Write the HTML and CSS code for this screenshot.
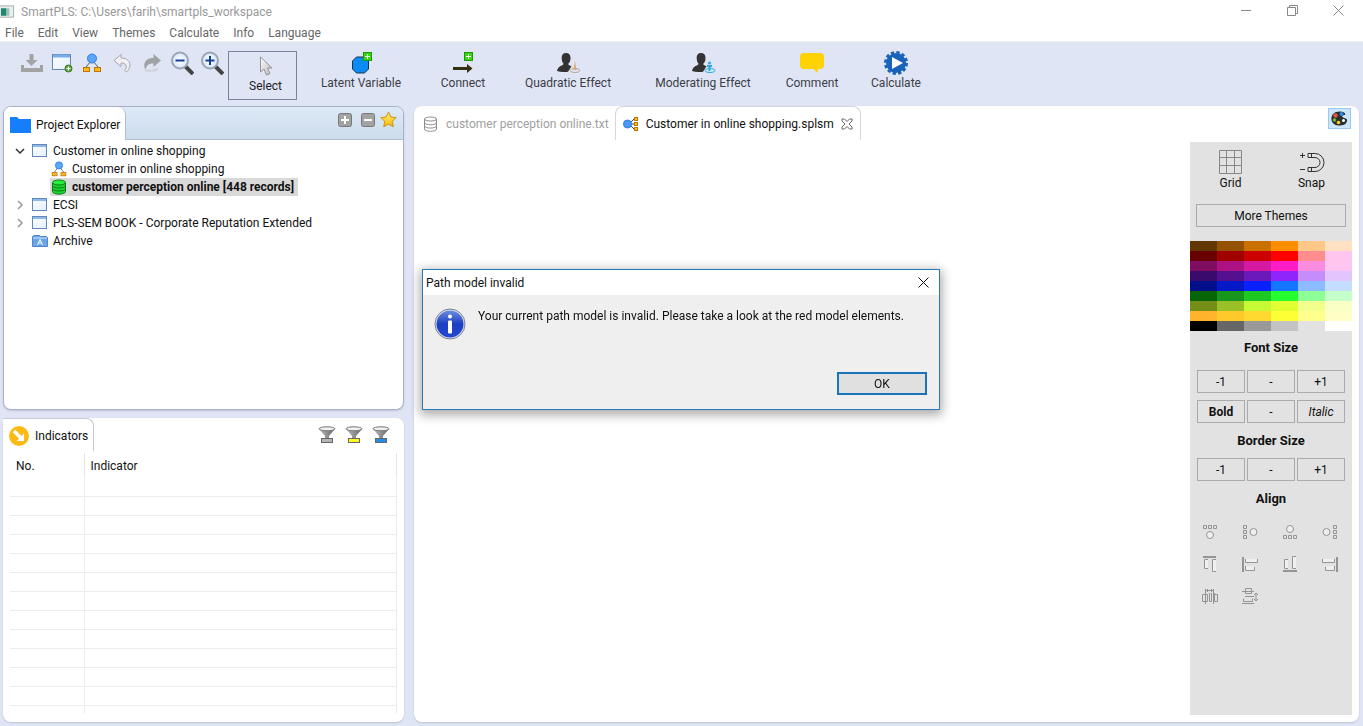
FILE: index.html
```html
<!DOCTYPE html>
<html lang="en">
<head>
<meta charset="utf-8">
<meta name="viewport" content="width=device-width, initial-scale=1">
<title>SmartPLS</title>
<link rel="stylesheet" href="styles.css">
</head>
<body>
<svg class="defs" width="0" height="0" aria-hidden="true">
  <defs>
    <linearGradient id="gArrow" x1="0" y1="0" x2="1" y2="1"><stop offset="0" stop-color="#fff"/><stop offset="1" stop-color="#b9b9bd"/></linearGradient>
    <linearGradient id="gStar" x1="0" y1="0" x2="0" y2="1"><stop offset="0" stop-color="#fff27a"/><stop offset="1" stop-color="#f8b800"/></linearGradient>
    <linearGradient id="gInfo" x1="0" y1="0" x2="0" y2="1"><stop offset="0" stop-color="#6d8ee0"/><stop offset=".5" stop-color="#1d3fc0"/><stop offset="1" stop-color="#2247d2"/></linearGradient>
    <linearGradient id="gFunnel" x1="0" y1="0" x2="1" y2="0"><stop offset="0" stop-color="#bbb"/><stop offset="1" stop-color="#666"/></linearGradient>
    <linearGradient id="gWin" x1="0" y1="0" x2="1" y2="1"><stop offset="0" stop-color="#fff"/><stop offset="1" stop-color="#e3eefb"/></linearGradient>
    <radialGradient id="gLens"><stop offset="0" stop-color="#fff"/><stop offset="1" stop-color="#d4e6f8"/></radialGradient>
  </defs>
  <symbol id="window" viewBox="0 0 16 14"><rect x=".5" y=".5" width="14" height="12" fill="url(#gWin)" stroke="#6187b8"/><path d="M1 2h13" stroke="#8db8ea" stroke-width="2"/></symbol>
  <symbol id="model" viewBox="0 0 20 20"><path d="M9 8L4 14M11 8l5 6" stroke="#555" stroke-width="1"/><circle cx="10" cy="5.500" r="4.500" fill="#5ba5fa" stroke="#2f7de0"/><rect x="1.500" y="14.500" width="6" height="4" fill="#ffb91f" stroke="#bb7408"/><rect x="12.500" y="14.500" width="6" height="4" fill="#ffb91f" stroke="#bb7408"/></symbol>
  <symbol id="funnel" viewBox="0 0 18 18"><path d="M1 3l6 7v4h4v-4l6-7z" fill="url(#gFunnel)"/><ellipse cx="9" cy="2.800" rx="8" ry="2" fill="#f0f0f0" stroke="#777"/><rect x="3.500" y="12.500" width="11" height="4" fill="currentColor" stroke="#666"/></symbol>
  <symbol id="person" viewBox="0 0 15 19"><path d="M9 0c-3 0-4.500 2-4.300 5 0 3 .8 4.500 1.800 5.800 0 2-5.500 1.700-6.500 7.200q5 1.500 11 .8l3.500-5.500c-1.800-1-3.200-1-3.200-2.500C12.700 9.500 13.500 8 13.500 5c.1-3-1.500-5-4.500-5z" fill="#333"/></symbol>
  <symbol id="add" viewBox="0 0 9 9"><rect x=".5" y=".5" width="8" height="8" fill="#37d60d" stroke="#1d9b05"/><path d="M4.500 2v5M2 4.500h5" stroke="#fff"/></symbol>
</svg>

<header>
  <div class="titlebar">
    <svg class="app-icon" viewBox="0 0 16 14" aria-hidden="true"><rect x="-1" y=".5" width="15.500" height="12" fill="#e9eeee" stroke="#a8adb0"/><rect x="1" y="3" width="6" height="8" fill="#258571"/><rect x="7" y="3" width="3" height="8" fill="#9cc5bd"/></svg>
    <h1>SmartPLS: C:\Users\farih\smartpls_workspace</h1>
    <div class="window-controls">
      <button type="button" aria-label="Minimize"><svg viewBox="0 0 11 11"><path d="M0 5.500h10" /></svg></button>
      <button type="button" aria-label="Restore"><svg viewBox="0 0 11 11"><path d="M.5 2.500h8v8h-8zM2.500 2.500v-2h8v8h-2"/></svg></button>
      <button type="button" aria-label="Close"><svg viewBox="0 0 11 11"><path d="M.5.5l10 10M10.500.5l-10 10"/></svg></button>
    </div>
  </div>
  <nav class="menubar" aria-label="Main menu">
    <button type="button">File</button><button type="button">Edit</button><button type="button">View</button><button type="button">Themes</button><button type="button">Calculate</button><button type="button">Info</button><button type="button">Language</button>
  </nav>
</header>

<div class="toolbar" role="toolbar" aria-label="Tools">
  <div class="quick-tools">
    <button type="button" aria-label="Save"><svg width="24" height="20" viewBox="0 0 24 20"><path d="M9.500 1h4v6h4L11.500 13 5.500 7h4z" fill="#a3a3a3"/><path d="M1 12h3v3h16v-3h3v7H1z" fill="#a3a3a3"/></svg></button>
    <button type="button" aria-label="New project"><svg width="22" height="20" viewBox="0 0 22 20"><rect x="1.500" y="1.500" width="18" height="15" fill="url(#gWin)" stroke="#6187b8"/><path d="M2 3h17" stroke="#77aeea" stroke-width="3"/><circle cx="17.500" cy="15.500" r="3.500" fill="#65a843" stroke="#397520"/><path d="M17.500 13.500v4M15.500 15.500h4" stroke="#fff"/></svg></button>
    <button type="button" aria-label="New path model"><svg width="20" height="20"><use href="#model"/></svg></button>
    <button type="button" aria-label="Undo"><svg width="18" height="20" viewBox="0 0 18 20"><path d="M1 7.500L8 1.500v3.500c9 0 12 8 5.500 14-1-.5-1.500-1-2-1.500C15 14 13 9.500 8 10v3.500z" fill="#f0f0f2" stroke="#a6a6aa"/></svg></button>
    <button type="button" aria-label="Redo"><svg width="18" height="20" viewBox="0 0 18 20"><path d="M18 7.500L10.500 1v4C3 4.500-1 11 2.500 17c.7-5 4-7 8-6.500v3.500z" fill="#a0a2a6"/><path d="M2 17q6 2 13-1" stroke="#d0d2da" fill="none" stroke-width="2"/></svg></button>
    <button type="button" aria-label="Zoom out"><svg width="24" height="24" viewBox="0 0 24 24"><path d="M15 15l8 8" stroke="#444" stroke-width="4"/><circle cx="10" cy="9.500" r="8" fill="url(#gLens)" stroke="#9aa6b5" stroke-width="2"/><path d="M5.500 9.500h9" stroke="#153d9c" stroke-width="2"/></svg></button>
    <button type="button" aria-label="Zoom in"><svg width="24" height="24" viewBox="0 0 24 24"><path d="M15 15l8 8" stroke="#444" stroke-width="4"/><circle cx="10" cy="9.500" r="8" fill="url(#gLens)" stroke="#9aa6b5" stroke-width="2"/><path d="M5.500 9.500h9M10 5v9" stroke="#153d9c" stroke-width="2"/></svg></button>
  </div>
  <button type="button" class="tool tool-select" aria-pressed="true"><svg width="14" height="20" viewBox="0 0 14 20"><path d="M1.500 1v15l3.500-3 2.500 6 3.500-1.500-2.500-5.500h4.500z" fill="url(#gArrow)" stroke="#929297"/></svg><span>Select</span></button>
  <button type="button" class="tool tool-latent"><svg width="22" height="22" viewBox="0 0 22 22"><path d="M6.500 5h8l4 4v8l-4 4h-8l-4-4V9z" fill="#0d8bf5" stroke="#17354e"/><use href="#add" x="13" y="0" width="9" height="9"/></svg><span>Latent Variable</span></button>
  <button type="button" class="tool tool-connect"><svg width="20" height="22" viewBox="0 0 20 22"><path d="M0 15h14v-3l5.500 4.500L14 21v-3H0z" fill="#352f12"/><use href="#add" x="11" y="0" width="9" height="9"/></svg><span>Connect</span></button>
  <button type="button" class="tool tool-quadratic"><svg width="25" height="22" viewBox="0 0 25 22"><use href="#person" x="1" y="1" width="15" height="19"/><ellipse cx="19" cy="18.500" rx="5" ry="2" fill="none" stroke="#bba795"/><path d="M19 9l-1.500 9h3z" fill="#dba66f"/></svg><span>Quadratic Effect</span></button>
  <button type="button" class="tool tool-moderating"><svg width="25" height="22" viewBox="0 0 25 22"><use href="#person" x="1" y="1" width="15" height="19"/><ellipse cx="19" cy="18.500" rx="5" ry="2" fill="#d5effb" stroke="#2fa5dd"/><circle cx="18.500" cy="11" r="1.500" fill="#2fa5dd"/><path d="M16 13h5v2h-1.500v4h-2v-4H16z" fill="#2fa5dd"/></svg><span>Moderating Effect</span></button>
  <button type="button" class="tool tool-comment"><svg width="24" height="22" viewBox="0 0 24 22"><path d="M4 1h16q4 0 4 4v8q0 4-4 4h-2l-.5 4-4-4H4q-4 0-4-4V5q0-4 4-4z" fill="#ffd203"/></svg><span>Comment</span></button>
  <button type="button" class="tool tool-calculate"><svg width="24" height="24" viewBox="0 0 24 24"><circle cx="12" cy="12" r="10" fill="#1963b9"/><circle cx="12" cy="12" r="10.500" fill="none" stroke="#1963b9" stroke-width="3" stroke-dasharray="3.300 2.200"/><path d="M8 6l11 6-11 6z" fill="#fff"/></svg><span>Calculate</span></button>
</div>

<main class="workspace">
  <div class="sidebar">
    <section class="panel explorer">
      <div class="panel-head">
        <h2 class="panel-tab"><svg width="23" height="18" viewBox="0 0 23 18"><path d="M1 1h7l2 2h12v14H1z" fill="#147efb"/></svg>Project Explorer</h2>
        <div class="panel-actions">
          <button type="button" aria-label="Expand all"><svg width="14" height="14" viewBox="0 0 14 14"><rect x=".5" y=".5" width="13" height="13" rx="2" fill="#a3a3a3" stroke="#777"/><path d="M7 3v8M3 7h8" stroke="#fff" stroke-width="2"/></svg></button>
          <button type="button" aria-label="Collapse all"><svg width="14" height="14" viewBox="0 0 14 14"><rect x=".5" y=".5" width="13" height="13" rx="2" fill="#a3a3a3" stroke="#777"/><path d="M3 7h8" stroke="#fff" stroke-width="2"/></svg></button>
          <button type="button" aria-label="Favorites"><svg width="17" height="17" viewBox="0 0 17 17"><path d="M8.500 1l2.300 5 5.400.6-4 3.700 1.100 5.500-4.800-2.700-4.800 2.700 1.100-5.500-4-3.700L6.200 6z" fill="url(#gStar)" stroke="#cf9110"/></svg></button>
        </div>
      </div>
      <ul class="tree">
        <li><div class="node"><svg class="chevron open" viewBox="0 0 10 10"><path d="M1 3l4 4 4-4"/></svg><svg class="node-icon"><use href="#window"/></svg><span>Customer in online shopping</span></div>
          <ul>
            <li><div class="node"><svg class="node-icon"><use href="#model"/></svg><span>Customer in online shopping</span></div></li>
            <li><div class="node selected"><svg class="node-icon" viewBox="0 0 16 16"><path d="M1.500 3.500v9c0 3.500 13 3.500 13 0v-9z" fill="#18d72c" stroke="#12761c"/><ellipse cx="8" cy="3.500" rx="6.500" ry="2.500" fill="#25ef3c" stroke="#12761c"/><path d="M1.500 6.500c0 3.300 13 3.300 13 0M1.500 9.500c0 3.300 13 3.300 13 0" fill="none" stroke="#12761c"/></svg><span>customer perception online [448 records]</span></div></li>
          </ul>
        </li>
        <li><div class="node"><svg class="chevron" viewBox="0 0 10 10"><path d="M3 1l4 4-4 4"/></svg><svg class="node-icon"><use href="#window"/></svg><span>ECSI</span></div></li>
        <li><div class="node"><svg class="chevron" viewBox="0 0 10 10"><path d="M3 1l4 4-4 4"/></svg><svg class="node-icon"><use href="#window"/></svg><span>PLS-SEM BOOK - Corporate Reputation Extended</span></div></li>
        <li><div class="node"><span class="chevron"></span><svg class="node-icon" viewBox="0 0 16 14"><path d="M.5 2.500h1v-1h6l1 1h6l1 1v9h-15z" fill="#6aa5e5" stroke="#4d86cc"/><path d="M1 4h14" stroke="#c8e0fa"/><path d="M5.500 11L8 5.500l2.500 5.500M6.500 9h3" fill="none" stroke="#fff"/></svg><span>Archive</span></div></li>
      </ul>
    </section>

    <section class="panel indicators">
      <div class="panel-head">
        <h2 class="panel-tab"><svg width="20" height="20" viewBox="0 0 20 20"><circle cx="10" cy="10" r="10" fill="#fcba16"/><path d="M5 5l7 7" stroke="#fff" stroke-width="3.500"/><path d="M15 7.500V15H7.500z" fill="#fff"/></svg>Indicators</h2>
        <div class="panel-actions">
          <button type="button" class="filter-gray" aria-label="Clear filter"><svg width="18" height="18"><use href="#funnel"/></svg></button>
          <button type="button" class="filter-yellow" aria-label="Yellow filter"><svg width="18" height="18"><use href="#funnel"/></svg></button>
          <button type="button" class="filter-blue" aria-label="Blue filter"><svg width="18" height="18"><use href="#funnel"/></svg></button>
        </div>
      </div>
      <table class="indicator-table">
        <thead><tr><th scope="col">No.</th><th scope="col">Indicator</th></tr></thead>
        <tbody>
          <tr><td></td><td></td></tr><tr><td></td><td></td></tr><tr><td></td><td></td></tr><tr><td></td><td></td></tr>
          <tr><td></td><td></td></tr><tr><td></td><td></td></tr><tr><td></td><td></td></tr><tr><td></td><td></td></tr>
          <tr><td></td><td></td></tr><tr><td></td><td></td></tr><tr><td></td><td></td></tr><tr><td></td><td></td></tr>
          <tr class="partial"><td></td><td></td></tr>
        </tbody>
      </table>
    </section>
  </div>

  <section class="panel editor">
    <div class="editor-head">
      <div class="tabs" role="tablist">
        <button type="button" class="tab" role="tab" aria-selected="false"><svg width="16" height="16" viewBox="0 0 16 16" fill="none" stroke="#8d8d8d"><path d="M1.500 3v10c0 3 12 3 12 0V3"/><ellipse cx="7.500" cy="3" rx="6" ry="2"/><path d="M1.500 6.500c0 3 12 3 12 0M1.500 9.800c0 3 12 3 12 0"/></svg><span>customer perception online.txt</span></button>
        <button type="button" class="tab active" role="tab" aria-selected="true"><svg width="16" height="16" viewBox="0 0 16 16"><path d="M7 7l4-4M7 8h4M7 9l4 4" stroke="#444"/><circle cx="4.500" cy="8" r="4" fill="#4a98f8" stroke="#2f7de0"/><rect x="11.500" y="1.500" width="3" height="3" fill="#ffbe30" stroke="#bb7408"/><rect x="11.500" y="6.500" width="3" height="3" fill="#ffbe30" stroke="#bb7408"/><rect x="11.500" y="11.500" width="3" height="3" fill="#ffbe30" stroke="#bb7408"/></svg><span>Customer in online shopping.splsm</span><svg class="tab-close" width="12" height="12" viewBox="0 0 12 12"><path d="M1 1h2.500L6 3.500 8.500 1H11v2L8 6l3 3v2H8.500L6 8.500 3.500 11H1V9l3-3-3-3z" fill="#fff" stroke="#666"/></svg></button>
      </div>
      <button type="button" class="palette-toggle" aria-label="Themes palette"><svg width="17" height="15" viewBox="0 0 17 15"><path d="M9 .5C3 .5 0 4 .5 8.500 1 12.500 4 14.500 9 14.500c5 0 7.500-3 7-6-.5-1.500-3.500-1-4.500-2.500S13 4 14.500 3.500C14 1.500 12 .5 9 .5z" fill="#26302f"/><circle cx="4.500" cy="4.500" r="2.200" fill="#e8543f"/><circle cx="10.500" cy="3" r="2" fill="#2c8af0"/><circle cx="3.500" cy="9" r="1.800" fill="#79b52e"/><circle cx="7.500" cy="11.500" r="1.800" fill="#ffc928"/><circle cx="12.500" cy="9.500" r="1.500" fill="#fff"/></svg></button>
    </div>
    <div class="editor-body">
      <div class="canvas"></div>
      <aside class="themes" aria-label="Theme settings">
        <div class="snap-row">
          <button type="button"><svg width="24" height="24" viewBox="0 0 24 24" fill="none" stroke="#888"><path d="M.5.5h22v23H.5zM7.500 1v22M15.500 1v22M1 7.500h22M1 15.500h22"/></svg><span>Grid</span></button>
          <button type="button"><svg width="26" height="24" viewBox="0 0 26 24" fill="none" stroke="#333"><path d="M9 3.500h7a9 9 0 0 1 0 18H9v-4h7a5 5 0 0 0 0-10H9zM12.500 3.500v4M12.500 17.500v4M1 5.500h5M3.500 3v5M1 19.500h5"/></svg><span>Snap</span></button>
        </div>
        <button type="button" class="box-button more">More Themes</button>
        <div class="swatches" id="swatches" role="group" aria-label="Colors"></div>
        <h3>Font Size</h3>
        <div class="button-row"><button type="button" class="box-button">-1</button><button type="button" class="box-button">-</button><button type="button" class="box-button">+1</button></div>
        <div class="button-row"><button type="button" class="box-button strong">Bold</button><button type="button" class="box-button">-</button><button type="button" class="box-button slanted">Italic</button></div>
        <h3>Border Size</h3>
        <div class="button-row"><button type="button" class="box-button">-1</button><button type="button" class="box-button">-</button><button type="button" class="box-button">+1</button></div>
        <h3>Align</h3>
        <div class="align-grid">
          <button type="button" aria-label="Indicators top"><svg viewBox="0 0 16 16"><path d="M1.500 1.500h3v3h-3zM6.500 1.500h3v3h-3zM11.500 1.500h3v3h-3z"/><circle class="fill" cx="8" cy="11" r="3.500"/></svg></button>
          <button type="button" aria-label="Indicators left"><svg viewBox="0 0 16 16"><path d="M1.500 1.500h3v3h-3zM1.500 6.500h3v3h-3zM1.500 11.500h3v3h-3z"/><circle class="fill" cx="11.500" cy="8" r="3.500"/></svg></button>
          <button type="button" aria-label="Indicators bottom"><svg viewBox="0 0 16 16"><path d="M1.500 11.500h3v3h-3zM6.500 11.500h3v3h-3zM11.500 11.500h3v3h-3z"/><circle class="fill" cx="8" cy="5" r="3.500"/></svg></button>
          <button type="button" aria-label="Indicators right"><svg viewBox="0 0 16 16"><path d="M11.500 1.500h3v3h-3zM11.500 6.500h3v3h-3zM11.500 11.500h3v3h-3z"/><circle class="fill" cx="4.500" cy="8" r="3.500"/></svg></button>
          <button type="button" aria-label="Align top"><svg viewBox="0 0 16 16"><path d="M1 1h13" stroke-width="2"/><path class="fill" d="M6 3.500H2.500v9H6M14 3.500h-3.500v12H14"/></svg></button>
          <button type="button" aria-label="Align left"><svg viewBox="0 0 16 16"><path d="M1 1v15" stroke-width="2"/><path class="fill" d="M3.500 3v3.500h12V3M3.500 10v4.500h9V11"/></svg></button>
          <button type="button" aria-label="Align bottom"><svg viewBox="0 0 16 16"><path d="M1 15h14" stroke-width="2"/><path class="fill" d="M6 3.500H2.500v9H6M14 .5h-3.500v12H14"/></svg></button>
          <button type="button" aria-label="Align right"><svg viewBox="0 0 16 16"><path d="M15 1v15" stroke-width="2"/><path class="fill" d="M12.500 3v3.500h-12V3M12.500 10v4.500h-9V11"/></svg></button>
          <button type="button" aria-label="Distribute horizontally"><svg viewBox="0 0 16 16"><path d="M.5 6.500h5v7h-5zM3.500 1v15M7.500 5v8.500h2V5M12.500 5v8.500h3V6.500h-3M11.500 1v15M4 2.500h7M6 1L4.500 2.500 6 4M9 1l1.500 1.500L9 4"/></svg></button>
          <button type="button" aria-label="Distribute vertically"><svg viewBox="0 0 16 16"><path d="M3.500.5h6v5h-6zM0 3.500h12M3 8.500h9M1.500 10.500v3h9v-3M0 15.500h12M14 5v8M12 7l2-2 2 2M12 11l2 2 2-2"/></svg></button>
        </div>
      </aside>
    </div>
  </section>
</main>

<div class="dialog-layer">
  <div class="dialog" role="alertdialog" aria-labelledby="dialog-title" aria-describedby="dialog-text">
    <div class="dialog-head"><h2 id="dialog-title">Path model invalid</h2><button type="button" aria-label="Close dialog"><svg width="11" height="11" viewBox="0 0 11 11"><path d="M.5.5l10 10M10.500.5l-10 10" stroke="#111"/></svg></button></div>
    <div class="dialog-body">
      <svg width="32" height="32" viewBox="0 0 32 32" aria-hidden="true"><circle cx="16" cy="16" r="15" fill="#dfe5f3" stroke="#777e92"/><circle cx="16" cy="16" r="13.500" fill="url(#gInfo)"/><circle cx="16" cy="8.500" r="2" fill="#fff"/><rect x="14" y="12.500" width="4" height="13" rx="1" fill="#fff"/></svg>
      <p id="dialog-text">Your current path model is invalid. Please take a look at the red model elements.</p>
    </div>
    <div class="dialog-actions"><button type="button">OK</button></div>
  </div>
</div>
<script src="script.js"></script>
</body>
</html>
```
FILE: styles.css
```css
* { box-sizing: border-box; }
body {
  margin: 0;
  min-height: 100vh;
  display: flex;
  flex-direction: column;
  background: #e0e5f5;
  color: #111;
  font: 12px/16px Roboto, "Noto Sans", sans-serif;
}
h1, h2, h3, p, ul { margin: 0; padding: 0; font-size: 12px; font-weight: 400; }
ul { list-style: none; }
button { margin: 0; padding: 0; border: 0; background: none; color: inherit; font: inherit; }
svg { display: block; flex: none; }
.defs { position: absolute; }

header { background: #fff; border-bottom: 1px solid #edeff5; }
.titlebar { display: flex; align-items: center; height: 24px; gap: 6px; color: #999; }
.app-icon { width: 15px; height: 14px; }
.window-controls { display: flex; margin-left: auto; gap: 1px; align-self: flex-start; padding-right: 2px; }
.window-controls button { width: 45px; height: 20px; display: grid; place-items: center; }
.window-controls svg { width: 11px; height: 11px; fill: none; stroke: #888; }
.menubar { display: flex; gap: 14px; padding: 1px 5px 0; color: #666; }

.toolbar { display: flex; align-items: flex-start; padding: 9px 0 6px 17px; color: #3b3d46; }
.quick-tools { display: flex; width: 211px; }
.quick-tools button { width: 30px; height: 24px; display: grid; place-items: center; }
.tool { display: flex; flex-direction: column; align-items: center; white-space: nowrap; height: 49px; }
.tool svg { height: 24px; }
.tool-select { width: 69px; border: 1px solid #7c829b; padding: 2px 0 0 6px; color: #222; }
.tool-latent { width: 128px; }
.tool-connect { width: 76px; }
.tool-quadratic { width: 134px; }
.tool-moderating { width: 136px; }
.tool-comment { width: 82px; }
.tool-calculate { width: 86px; }

.workspace {
  flex: 1;
  display: grid;
  grid-template-columns: 401px minmax(0, 1fr);
  gap: 10px;
  padding: 0 4px 4px 3px;
}
.panel { background: #fff; border-radius: 8px; box-shadow: 0 1px 2px #bcc3d6; }
.sidebar { display: grid; grid-template-rows: 304px 1fr; gap: 8px; }
.explorer { border: 1px solid #aab1c6; overflow: hidden; }
.explorer .panel-head { background: linear-gradient(#dce9f7, #ccdcec); border-bottom: 1px solid #b2bdce; }
.panel-head { display: flex; height: 33px; justify-content: space-between; }
.panel-tab {
  display: flex;
  align-items: center;
  gap: 4px;
  padding: 2px 5px 0;
  background: #fff;
  border-right: 1px solid #b2bdce;
  border-radius: 0 8px 0 0;
  white-space: nowrap;
}
.explorer .panel-head .panel-tab { margin-bottom: -1px; }
.panel-actions { display: flex; align-items: flex-start; gap: 9px; padding: 4px 6px 0 0; }
.explorer .panel-actions button { height: 17px; display: grid; place-items: center; }
.explorer .panel-actions button:last-child { margin-left: -4px; }

.tree { padding: 2px 0 0 11px; }
.tree ul { padding-left: 35px; }
.node { display: flex; align-items: center; width: max-content; height: 18px; padding-right: 4px; }
.chevron { width: 10px; height: 10px; margin-right: 6px; fill: none; stroke: #999; stroke-width: 1.5; }
.chevron.open { stroke: #333; }
.node-icon { width: 16px; height: 16px; margin-right: 5px; margin-left: 1px; }
.selected { background: #d9d9d9; font-weight: 700; }

.indicators .panel-tab { border: 1px solid #c5cad8; border-bottom: 0; border-left: 0; gap: 6px; padding: 2px 5px 0 6px; }
.indicators .panel-actions { padding: 8px 14px 0 0; }
.filter-gray { color: #b5b5b5; }
.filter-yellow { color: #ffff1a; }
.filter-blue { color: #238be8; }
.indicator-table { table-layout: fixed; width: calc(100% - 14px); margin: 2px 7px 7px; border-collapse: collapse; }
.indicator-table th { height: 24px; padding: 1px 6px 0; text-align: left; font-weight: 400; border-right: 1px solid #e4e4e4; }
.indicator-table th:first-child { width: 74px; }
.indicator-table td { height: 19px; padding: 0; border-right: 1px solid #ececec; border-bottom: 1px solid #ececec; }
.indicator-table .partial td { height: 9px; border-bottom: 0; }

.editor { display: flex; flex-direction: column; padding: 0 7px 7px 0; }
.editor-head { display: flex; justify-content: space-between; align-items: flex-start; height: 36px; }
.tabs { display: flex; }
.tab { display: flex; align-items: center; gap: 7px; height: 34px; padding: 2px 6px 0 9px; color: #a0a0a0; white-space: nowrap; }
.tab.active { color: #111; padding: 1px 7px 0; border: 1px solid #d3d7e3; border-bottom: 0; border-radius: 8px 8px 0 0; }
.palette-toggle { width: 23px; height: 21px; margin: 2px 1px 0 0; border: 1px solid #99c9f3; background: #cce6fb; display: grid; place-items: center; }
.editor-body { flex: 1; display: flex; }
.canvas { flex: 1; }
.themes { width: 162px; background: #e2e2e2; padding-top: 8px; }
.snap-row { display: grid; grid-template-columns: 1fr 1fr; padding-bottom: 13px; }
.snap-row button { display: flex; flex-direction: column; align-items: center; gap: 1px; }
.box-button { height: 23px; border: 1px solid #aaa; background: #e2e2e2; }
.more { display: block; width: calc(100% - 12px); margin: 0 6px 14px; }
.swatches { display: grid; grid-template-columns: repeat(6, 1fr); grid-auto-rows: 10px; margin-bottom: 9px; }
.themes h3 { font-size: 13px; font-weight: 700; text-align: center; margin-bottom: 14px; }
.button-row { display: grid; grid-template-columns: repeat(3, 1fr); gap: 2px; padding: 0 7px; margin-bottom: 7px; }
.button-row + h3 { margin-top: 10px; margin-bottom: 9px; }
.strong { font-weight: 700; }
.slanted { font-style: italic; }
.align-grid { display: grid; grid-template-columns: repeat(4, 40px); grid-auto-rows: 32px; }
.align-grid button { display: grid; place-items: center; }
.align-grid svg { width: 16px; height: 16px; fill: none; stroke: #949494; }
.align-grid .fill { fill: #efefef; }

.dialog-layer { position: fixed; inset: 0; display: flex; justify-content: center; align-items: flex-start; padding: 269px 1px 0 0; }
.dialog { width: 518px; background: #efefef; border: 1px solid #2a7ab8; box-shadow: 0 3px 10px 2px #0005; }
.dialog-head { display: flex; justify-content: space-between; align-items: center; height: 25px; padding: 0 10px 0 3px; background: #fff; }
.dialog-body { display: flex; gap: 12px; padding: 13px 11px 0; }
.dialog-actions { display: flex; justify-content: flex-end; padding: 32px 12px 14px; }
.dialog-actions button { width: 90px; height: 23px; border: 2px solid #1a74b8; background: #e0e0e0; }
```
FILE: script.js
```js
const palette = [
  ["#633800", "#945200", "#ca7000", "#ff8d00", "#ffc788", "#ffe1c2"],
  ["#690000", "#a00000", "#cc0000", "#ff0000", "#ff8d8d", "#ffc5ee"],
  ["#7f0d61", "#ad1282", "#d519a2", "#ff1dc8", "#fb8de0", "#ffc4f0"],
  ["#3b0b6b", "#541090", "#6c19bc", "#8f24fb", "#c58cfb", "#e2c5fc"],
  ["#000f8c", "#0619c8", "#0920ff", "#1476ff", "#8cbcff", "#c5ddff"],
  ["#076407", "#16971b", "#1dc823", "#25ff30", "#8dff94", "#c5ffc9"],
  ["#758e18", "#99c025", "#c5fa35", "#e2ff34", "#f2ff8c", "#faffc5"],
  ["#ffb42c", "#ffc92c", "#ffd930", "#ffff35", "#ffff8e", "#ffffc5"],
  ["#000000", "#666666", "#999999", "#c3c3c3", "#e2e2e2", "#ffffff"]
];
const swatches = document.getElementById("swatches");
for (const color of palette.flat()) {
  const button = document.createElement("button");
  button.type = "button";
  button.setAttribute("aria-label", color);
  button.style.background = color;
  swatches.append(button);
}
```
